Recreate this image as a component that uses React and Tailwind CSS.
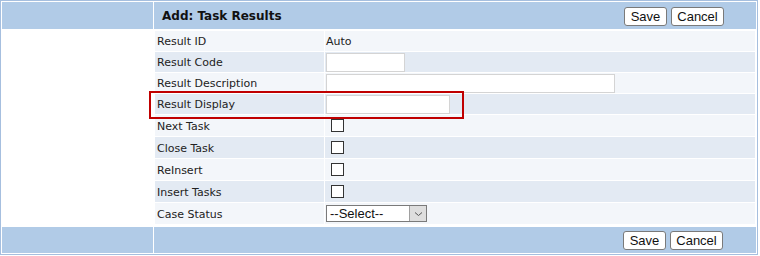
export default function App() {
    const rows = [
        { label: 'Result ID', kind: 'text', value: 'Auto', h: 'h-[20px]' },
        { label: 'Result Code', kind: 'input', w: 'w-[79px]', h: 'h-[20px]' },
        { label: 'Result Description', kind: 'input', w: 'w-[289px]', h: 'h-[20px]' },
        { label: 'Result Display', kind: 'input', w: 'w-[124px]', h: 'h-[20px]' },
        { label: 'Next Task', kind: 'check', h: 'h-[21px]' },
        { label: 'Close Task', kind: 'check', h: 'h-[21px]' },
        { label: 'ReInsert', kind: 'check', h: 'h-[21px]' },
        { label: 'Insert Tasks', kind: 'check', h: 'h-[21px]' },
        { label: 'Case Status', kind: 'select', h: 'h-[21px]' },
    ]

    const btn = 'h-[19px] bg-white border border-[#7a7a7a] rounded-[3px] text-[13px] leading-none text-[#111] font-["Liberation_Sans",Arial,sans-serif]'

    return (
        <div className="w-[760px] h-[256px] bg-white font-['DejaVu_Sans',Verdana,sans-serif]">
            <div className="relative w-[758px] h-[255px] border border-[#a6bfdf] p-px flex flex-col">
                {/* Header */}
                <div className="flex h-[27px] gap-px">
                    <div className="w-[151px] bg-[#b1cbe7]" />
                    <div className="flex-1 bg-[#b1cbe7] flex items-center pl-[8px] pr-[32px]">
                        <h2 className="pt-px text-[12px] font-bold text-[#111]">Add: Task Results</h2>
                        <div className="ml-auto flex gap-[4px] pt-px">
                            <button className={`${btn} w-[43px]`}>Save</button>
                            <button className={`${btn} w-[53px]`}>Cancel</button>
                        </div>
                    </div>
                </div>

                {/* Form rows */}
                <div className="flex mt-[2px]">
                    <div className="w-[153px]" />
                    <div className="flex-1 mr-px flex flex-col gap-px">
                        {rows.map((r, i) => (
                            <div key={r.label} className={`flex gap-px ${r.h}`}>
                                <div className={`w-[169px] pl-[2px] pt-[3px] flex items-center text-[11px] text-[#222] ${i % 2 ? 'bg-[#e3eaf3]' : 'bg-[#f3f6fa]'}`}>
                                    {r.label}
                                </div>
                                <div className={`flex-1 flex items-center pl-px ${i % 2 ? 'bg-[#e3eaf3]' : 'bg-[#f3f6fa]'}`}>
                                    {r.kind === 'text' && <span className="pt-[3px] text-[11px] text-[#222]">{r.value}</span>}
                                    {r.kind === 'input' && (
                                        <input type="text" className={`${r.w} h-[19px] bg-white border border-[#d4d4d4] outline-none`} />
                                    )}
                                    {r.kind === 'check' && (
                                        <span className="ml-[5px] w-[13px] h-[13px] bg-white border border-[#333]" />
                                    )}
                                    {r.kind === 'select' && (
                                        <div className="w-[101px] h-[17px] bg-white border border-[#7a7a7a] flex items-center">
                                            <span className="flex-1 pl-[3px] text-[13px] leading-none text-[#111] font-['Liberation_Sans',Arial,sans-serif]">--Select--</span>
                                            <span className="w-[17px] h-[15px] bg-[#dedede] border-l border-[#a0a0a0] flex items-center justify-center">
                                                <svg width="9" height="6" viewBox="0 0 9 6" fill="none" stroke="#555" strokeWidth="1">
                                                    <path d="M1 1.5 L4.5 4.5 L8 1.5" />
                                                </svg>
                                            </span>
                                        </div>
                                    )}
                                </div>
                            </div>
                        ))}
                    </div>
                </div>

                {/* Footer */}
                <div className="flex h-[26px] gap-px mt-[3px]">
                    <div className="w-[151px] bg-[#b1cbe7]" />
                    <div className="flex-1 bg-[#b1cbe7] flex items-center justify-end pr-[33px]">
                        <div className="flex gap-[4px] pt-px">
                            <button className={`${btn} w-[43px]`}>Save</button>
                            <button className={`${btn} w-[53px]`}>Cancel</button>
                        </div>
                    </div>
                </div>

                {/* Highlight around Result Display */}
                <div className="absolute left-[148px] top-[90px] w-[315px] h-[28px] border-2 border-[#c00000]" />
            </div>
        </div>
    )
}
